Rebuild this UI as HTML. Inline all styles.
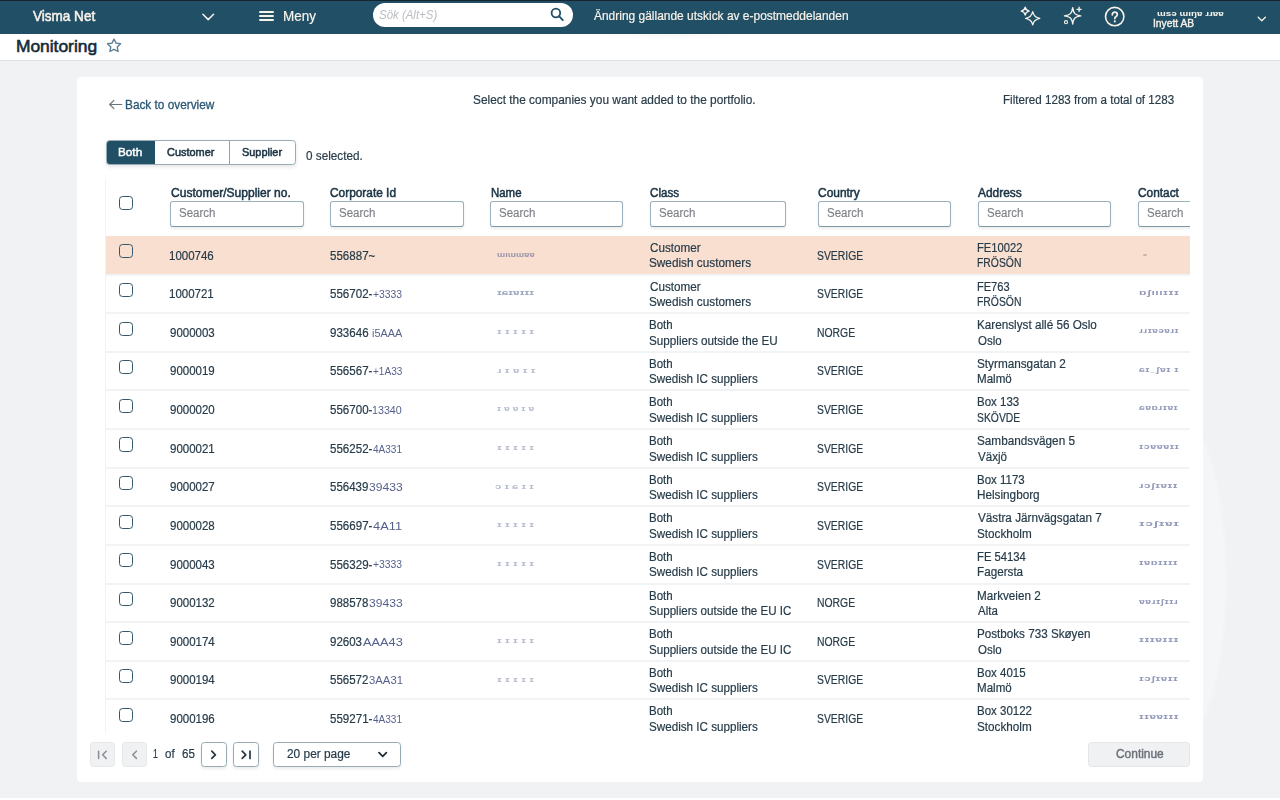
<!DOCTYPE html>
<html>
<head>
<meta charset="utf-8">
<style>
*{box-sizing:border-box;margin:0;padding:0}
html,body{width:1280px;height:800px;overflow:hidden}
body{position:relative;background:#f1f2f4;font-family:"Liberation Sans",sans-serif;color:#263b49}
.a{position:absolute;white-space:nowrap}
.sx{display:inline-block;transform-origin:0 50%}
.inp{position:absolute;height:25.5px;border:1px solid #9bb0bc;border-bottom-color:#7f98a6;border-radius:3px;background:#fff;box-shadow:0 2px 3px rgba(0,0,0,.07)}
.cb{position:absolute;width:14.2px;height:14.2px;border:1.7px solid #325769;border-radius:3.5px}
.rl{position:absolute;left:0;width:1084px;height:2px;background:#f2f3f4}
.pb{position:absolute;top:741.5px;height:25.8px;border-radius:3.5px}
</style>
</head>
<body>
<div class="a" style="left:0;top:0;width:1280px;height:1px;background:#17232e"></div>
<div class="a" style="left:0;top:1px;width:1280px;height:32.7px;background:#214f66"></div>
<div class="a" style="left:32.50px;top:8.002px;font-size:14.5px;line-height:16.197px;color:#f7f2ea;-webkit-text-stroke:0.55px #f7f2ea;"><span class="sx" style="transform:scaleX(0.9333)">Visma Net</span></div>
<svg class="a" style="left:200px;top:11px" width="16" height="12" viewBox="0 0 16 12"><path d="M2.9 3.2 L8.2 8.6 L13.6 3.2" fill="none" stroke="#f7f2ea" stroke-width="1.5" stroke-linecap="round" stroke-linejoin="round"/></svg>
<div class="a" style="left:259.2px;top:11.15px;width:14.6px;height:1.5px;background:#f7f2ea;border-radius:1px"></div>
<div class="a" style="left:259.2px;top:15.15px;width:14.6px;height:1.5px;background:#f7f2ea;border-radius:1px"></div>
<div class="a" style="left:259.2px;top:19.05px;width:14.6px;height:1.5px;background:#f7f2ea;border-radius:1px"></div>
<div class="a" style="left:282.67px;top:8.002px;font-size:14.5px;line-height:16.197px;color:#f7f2ea;-webkit-text-stroke:0.2px #f7f2ea;"><span class="sx" style="transform:scaleX(0.9286)">Meny</span></div>
<div class="a" style="left:373px;top:3.4px;width:199.5px;height:23.6px;background:#fff;border-radius:12px"></div>
<div class="a" style="left:379.00px;top:9.015px;font-size:12px;line-height:13.404px;color:#b9bdc2;font-style:italic;"><span class="sx" style="transform:scaleX(0.9541)">Sök (Alt+S)</span></div>
<svg class="a" style="left:548px;top:5px" width="18" height="18" viewBox="0 0 18 18"><circle cx="7.9" cy="8" r="4.3" fill="none" stroke="#214f66" stroke-width="1.8"/><path d="M11 11.2 L14.8 15.2" stroke="#214f66" stroke-width="1.8" stroke-linecap="round"/></svg>
<div class="a" style="left:593.60px;top:9.863px;font-size:12.5px;line-height:13.963px;color:#f7f2ea;-webkit-text-stroke:0.2px #f7f2ea;"><span class="sx" style="transform:scaleX(0.9564)">Ändring gällande utskick av e-postmeddelanden</span></div>
<svg class="a" style="left:1018px;top:4px" width="26" height="24" viewBox="0 0 26 24"><path d="M7.2 3.2 Q7.9 6.6 11.2 7.1 Q7.9 7.7 7.2 11 Q6.5 7.7 3.2 7.1 Q6.5 6.6 7.2 3.2Z" fill="none" stroke="#f7f2ea" stroke-width="1.3" stroke-linejoin="round"/><path d="M14.7 7.6 Q15.8 13.2 21.8 14.3 Q15.8 15.4 14.7 20.8 Q13.6 15.4 7.6 14.3 Q13.6 13.2 14.7 7.6Z" fill="none" stroke="#f7f2ea" stroke-width="1.3" stroke-linejoin="round"/></svg>
<svg class="a" style="left:1060px;top:4px" width="26" height="24" viewBox="0 0 26 24"><path d="M12.7 3.6 C13.60 9.60 14.90 10.90 20.8 11.8 C14.90 12.70 13.60 14.00 12.7 20.0 C11.80 14.00 10.50 12.70 4.4 11.8 C10.50 10.90 11.80 9.60 12.7 3.6Z" fill="none" stroke="#f7f2ea" stroke-width="1.35" stroke-linejoin="round"/><path d="M19.1 3.2 V7.4 M17 5.3 H21.2" stroke="#f7f2ea" stroke-width="1.3" stroke-linecap="round"/><circle cx="6" cy="18.2" r="1.55" fill="none" stroke="#f7f2ea" stroke-width="1.1"/></svg>
<svg class="a" style="left:1103px;top:5px" width="24" height="24" viewBox="0 0 24 24"><circle cx="11.7" cy="11.6" r="9.2" fill="none" stroke="#f7f2ea" stroke-width="1.6"/><path d="M9.3 9.8 Q9.3 7.1 11.8 7.1 Q14.3 7.1 14.3 9.5 Q14.3 10.9 12.8 11.7 Q11.8 12.2 11.8 13.6" fill="none" stroke="#f7f2ea" stroke-width="1.7" stroke-linecap="round"/><circle cx="11.8" cy="16.4" r="1.05" fill="#f7f2ea"/></svg>
<div class="a" style="left:1157.00px;top:9.885px;font-size:8px;line-height:8.936px;color:#f7f2ea;font-weight:bold;"><span class="sx" style="transform:scaleX(1.2315)">ɯsə ɯıŋɐ ɹɹɐɐ</span></div>
<div class="a" style="left:1153.17px;top:17.020px;font-size:11px;line-height:12.287px;color:#f7f2ea;-webkit-text-stroke:0.4px #f7f2ea;"><span class="sx" style="transform:scaleX(0.9349)">Inyett AB</span></div>
<svg class="a" style="left:1256px;top:15px" width="12" height="8" viewBox="0 0 12 8"><path d="M2.2 2.2 L5.8 5.8 L9.4 2.2" fill="none" stroke="#f7f2ea" stroke-width="1.3" stroke-linecap="round" stroke-linejoin="round"/></svg>
<div class="a" style="left:0;top:33.7px;width:1280px;height:27.2px;background:#fff;border-bottom:1px solid #dfe2e5"></div>
<div class="a" style="left:585px;top:33.7px;width:170px;height:7px;background:radial-gradient(ellipse at 50% 0%, rgba(20,40,80,.035), rgba(20,40,80,0) 70%)"></div>
<div class="a" style="left:15.90px;top:36.978px;font-size:17.4px;line-height:19.436px;color:#132b3b;-webkit-text-stroke:0.6px #132b3b;"><span class="sx" style="transform:scaleX(1.0000)">Monitoring</span></div>
<svg class="a" style="left:105px;top:37px" width="18" height="17" viewBox="0 0 18 17"><path d="M9.00 1.60 L11.00 5.75 L15.56 6.37 L12.23 9.55 L13.06 14.08 L9.00 11.90 L4.94 14.08 L5.77 9.55 L2.44 6.37 L7.00 5.75Z" fill="none" stroke="#5b7d92" stroke-width="1.35" transform="translate(0 0.4)" stroke-linejoin="round"/></svg>
<div class="a" style="left:1150px;top:430px;width:76px;height:300px;border-radius:50%;background:#f5f6f7;filter:blur(2px)"></div>
<div class="a" style="left:77px;top:77px;width:1126px;height:705px;background:#fff;border-radius:4px"></div>
<div class="a" style="left:0;top:798px;width:1280px;height:2px;background:#fff"></div>
<svg class="a" style="left:107px;top:97px" width="17" height="14" viewBox="0 0 17 14"><path d="M14.8 7.5 H2.8 M6.9 3.3 L2.7 7.5 L6.9 11.7" fill="none" stroke="#6c737a" stroke-width="1.15" stroke-linecap="round" stroke-linejoin="round"/></svg>
<div class="a" style="left:125.15px;top:98.862px;font-size:12.5px;line-height:13.963px;color:#2a5774;-webkit-text-stroke:0.3px #2a5774;"><span class="sx" style="transform:scaleX(0.9457)">Back to overview</span></div>
<div class="a" style="left:472.80px;top:93.862px;font-size:12.5px;line-height:13.963px;color:#293c49;-webkit-text-stroke:0.2px #293c49;"><span class="sx" style="transform:scaleX(0.9502)">Select the companies you want added to the portfolio.</span></div>
<div class="a" style="left:1002.77px;top:93.862px;font-size:12.5px;line-height:13.963px;color:#293c49;-webkit-text-stroke:0.2px #293c49;"><span class="sx" style="transform:scaleX(0.9295)">Filtered 1283 from a total of 1283</span></div>
<div class="a" style="left:106px;top:140.1px;width:189.6px;height:24.8px;border:1px solid #97abb7;border-radius:3.5px;background:#fff;box-shadow:0 2px 4px rgba(0,0,0,.10);overflow:hidden"><div style="position:absolute;left:-1px;top:-1px;width:49.4px;height:25px;background:#214f66"></div><div style="position:absolute;left:122.4px;top:0;width:1px;height:23px;background:#8fa4b0"></div></div>
<div class="a" style="left:117.99px;top:145.977px;font-size:11.6px;line-height:12.957px;color:#ffffff;-webkit-text-stroke:0.45px #fff;"><span class="sx" style="transform:scaleX(1.0136)">Both</span></div>
<div class="a" style="left:167.40px;top:145.977px;font-size:11.6px;line-height:12.957px;color:#1c3445;-webkit-text-stroke:0.55px #1c3445;"><span class="sx" style="transform:scaleX(0.9431)">Customer</span></div>
<div class="a" style="left:241.80px;top:145.977px;font-size:11.6px;line-height:12.957px;color:#1c3445;-webkit-text-stroke:0.55px #1c3445;"><span class="sx" style="transform:scaleX(0.9419)">Supplier</span></div>
<div class="a" style="left:306.00px;top:149.863px;font-size:12.5px;line-height:13.963px;color:#293c49;-webkit-text-stroke:0.2px #293c49;"><span class="sx" style="transform:scaleX(0.9383)">0 selected.</span></div>
<div class="a" style="left:106px;top:179px;width:1084px;height:554px;overflow:hidden;background:#fff">
<div class="cb" style="left:13px;top:16.599999999999994px"></div>
<div class="a" style="left:64.50px;top:8.015px;font-size:12px;line-height:13.404px;color:#1a3344;-webkit-text-stroke:0.5px #1a3344;"><span class="sx" style="transform:scaleX(1.0034)">Customer/Supplier no.</span></div>
<div class="inp" style="left:64.10px;top:22.20px;width:133.60px"></div>
<div class="a" style="left:72.90px;top:28.015px;font-size:12px;line-height:13.404px;color:#7d8186;-webkit-text-stroke:0.15px #7d8186;"><span class="sx" style="transform:scaleX(0.9553)">Search</span></div>
<div class="a" style="left:224.20px;top:8.015px;font-size:12px;line-height:13.404px;color:#1a3344;-webkit-text-stroke:0.5px #1a3344;"><span class="sx" style="transform:scaleX(0.9896)">Corporate Id</span></div>
<div class="inp" style="left:224.10px;top:22.20px;width:133.60px"></div>
<div class="a" style="left:232.90px;top:28.015px;font-size:12px;line-height:13.404px;color:#7d8186;-webkit-text-stroke:0.15px #7d8186;"><span class="sx" style="transform:scaleX(0.9553)">Search</span></div>
<div class="a" style="left:384.50px;top:8.015px;font-size:12px;line-height:13.404px;color:#1a3344;-webkit-text-stroke:0.5px #1a3344;"><span class="sx" style="transform:scaleX(0.9531)">Name</span></div>
<div class="inp" style="left:384.40px;top:22.20px;width:133.00px"></div>
<div class="a" style="left:393.20px;top:28.015px;font-size:12px;line-height:13.404px;color:#7d8186;-webkit-text-stroke:0.15px #7d8186;"><span class="sx" style="transform:scaleX(0.9553)">Search</span></div>
<div class="a" style="left:544.40px;top:8.015px;font-size:12px;line-height:13.404px;color:#1a3344;-webkit-text-stroke:0.5px #1a3344;"><span class="sx" style="transform:scaleX(0.9667)">Class</span></div>
<div class="inp" style="left:544.30px;top:22.20px;width:136.00px"></div>
<div class="a" style="left:553.10px;top:28.015px;font-size:12px;line-height:13.404px;color:#7d8186;-webkit-text-stroke:0.15px #7d8186;"><span class="sx" style="transform:scaleX(0.9553)">Search</span></div>
<div class="a" style="left:712.00px;top:8.015px;font-size:12px;line-height:13.404px;color:#1a3344;-webkit-text-stroke:0.5px #1a3344;"><span class="sx" style="transform:scaleX(0.9953)">Country</span></div>
<div class="inp" style="left:712.00px;top:22.20px;width:132.70px"></div>
<div class="a" style="left:720.80px;top:28.015px;font-size:12px;line-height:13.404px;color:#7d8186;-webkit-text-stroke:0.15px #7d8186;"><span class="sx" style="transform:scaleX(0.9553)">Search</span></div>
<div class="a" style="left:872.30px;top:8.015px;font-size:12px;line-height:13.404px;color:#1a3344;-webkit-text-stroke:0.5px #1a3344;"><span class="sx" style="transform:scaleX(0.9932)">Address</span></div>
<div class="inp" style="left:871.90px;top:22.20px;width:132.80px"></div>
<div class="a" style="left:880.70px;top:28.015px;font-size:12px;line-height:13.404px;color:#7d8186;-webkit-text-stroke:0.15px #7d8186;"><span class="sx" style="transform:scaleX(0.9553)">Search</span></div>
<div class="a" style="left:1032.30px;top:8.015px;font-size:12px;line-height:13.404px;color:#1a3344;-webkit-text-stroke:0.5px #1a3344;"><span class="sx" style="transform:scaleX(0.9881)">Contact</span></div>
<div class="inp" style="left:1032.00px;top:22.20px;width:80.00px"></div>
<div class="a" style="left:1040.80px;top:28.015px;font-size:12px;line-height:13.404px;color:#7d8186;-webkit-text-stroke:0.15px #7d8186;"><span class="sx" style="transform:scaleX(0.9553)">Search</span></div>
<div class="a" style="left:0;top:57.00px;width:1084px;height:38.02px;background:#f9dfd0"></div>
<div class="rl" style="top:94.62px"></div>
<div class="cb" style="left:13px;top:65.30px"></div>
<div class="a" style="left:63.08px;top:70.862px;font-size:12.5px;line-height:13.963px;color:#263b49;-webkit-text-stroke:0.2px #263b49;"><span class="sx" style="transform:scaleX(0.9200)">1000746</span></div>
<div class="a" style="left:223.60px;top:70.862px;font-size:12.5px;line-height:13.963px;color:#263b49;-webkit-text-stroke:0.2px #263b49;"><span class="sx" style="transform:scaleX(0.9243)">556887~</span></div>
<div class="a" style="left:391.00px;top:71.665px;font-size:7px;line-height:7.819px;color:#4b5a8c;font-weight:bold;opacity:.55;"><span class="sx" style="transform:scaleX(1.3214)">ɯıɯɯɐɐ</span></div>
<div class="a" style="left:543.90px;top:62.862px;font-size:12.5px;line-height:13.963px;color:#263b49;-webkit-text-stroke:0.2px #263b49;"><span class="sx" style="transform:scaleX(0.9350)">Customer</span></div>
<div class="a" style="left:542.96px;top:77.862px;font-size:12.5px;line-height:13.963px;color:#263b49;-webkit-text-stroke:0.2px #263b49;"><span class="sx" style="transform:scaleX(0.9429)">Swedish customers</span></div>
<div class="a" style="left:710.97px;top:70.862px;font-size:12.5px;line-height:13.963px;color:#263b49;-webkit-text-stroke:0.2px #263b49;"><span class="sx" style="transform:scaleX(0.8300)">SVERIGE</span></div>
<div class="a" style="left:870.91px;top:62.862px;font-size:12.5px;line-height:13.963px;color:#263b49;-webkit-text-stroke:0.2px #263b49;"><span class="sx" style="transform:scaleX(0.8943)">FE10022</span></div>
<div class="a" style="left:870.97px;top:77.862px;font-size:12.5px;line-height:13.963px;color:#263b49;-webkit-text-stroke:0.2px #263b49;"><span class="sx" style="transform:scaleX(0.8300)">FRÖSÖN</span></div>
<div class="a" style="left:1037px;top:74.50px;width:4px;height:2px;background:#9a8a90;opacity:.5;border-radius:1px"></div>
<div class="rl" style="top:133.24px"></div>
<div class="cb" style="left:13px;top:103.92px"></div>
<div class="a" style="left:63.08px;top:108.862px;font-size:12.5px;line-height:13.963px;color:#263b49;-webkit-text-stroke:0.2px #263b49;"><span class="sx" style="transform:scaleX(0.9200)">1000721</span></div>
<div class="a" style="left:223.60px;top:108.862px;font-size:12.5px;line-height:13.963px;color:#263b49;-webkit-text-stroke:0.2px #263b49;"><span class="sx" style="transform:scaleX(0.9243)">556702-</span></div>
<div class="a" style="left:267.32px;top:109.020px;font-size:11px;line-height:12.287px;color:#2a3870;opacity:.8;"><span class="sx" style="transform:scaleX(0.9414)">+3333</span></div>
<div class="a" style="left:391.00px;top:109.665px;font-size:7px;line-height:7.819px;color:#4b5a8c;font-weight:bold;opacity:.55;"><span class="sx" style="transform:scaleX(1.6818)">ɪɕɪɐɪɪɪ</span></div>
<div class="a" style="left:543.90px;top:101.862px;font-size:12.5px;line-height:13.963px;color:#263b49;-webkit-text-stroke:0.2px #263b49;"><span class="sx" style="transform:scaleX(0.9350)">Customer</span></div>
<div class="a" style="left:542.96px;top:116.862px;font-size:12.5px;line-height:13.963px;color:#263b49;-webkit-text-stroke:0.2px #263b49;"><span class="sx" style="transform:scaleX(0.9429)">Swedish customers</span></div>
<div class="a" style="left:710.97px;top:108.862px;font-size:12.5px;line-height:13.963px;color:#263b49;-webkit-text-stroke:0.2px #263b49;"><span class="sx" style="transform:scaleX(0.8300)">SVERIGE</span></div>
<div class="a" style="left:870.92px;top:101.862px;font-size:12.5px;line-height:13.963px;color:#263b49;-webkit-text-stroke:0.2px #263b49;"><span class="sx" style="transform:scaleX(0.8840)">FE763</span></div>
<div class="a" style="left:870.97px;top:116.862px;font-size:12.5px;line-height:13.963px;color:#263b49;-webkit-text-stroke:0.2px #263b49;"><span class="sx" style="transform:scaleX(0.8300)">FRÖSÖN</span></div>
<div class="a" style="left:1033.00px;top:110.213px;font-size:7.5px;line-height:8.377px;color:#3a4680;font-weight:bold;opacity:.55;letter-spacing:0.3px;"><span class="sx" style="transform:scaleX(1.6250)">ɒʃıııɪɪɪ</span></div>
<div class="rl" style="top:171.86px"></div>
<div class="cb" style="left:13px;top:142.54px"></div>
<div class="a" style="left:64.00px;top:147.863px;font-size:12.5px;line-height:13.963px;color:#263b49;-webkit-text-stroke:0.2px #263b49;"><span class="sx" style="transform:scaleX(0.9200)">9000003</span></div>
<div class="a" style="left:223.60px;top:147.863px;font-size:12.5px;line-height:13.963px;color:#263b49;-webkit-text-stroke:0.2px #263b49;"><span class="sx" style="transform:scaleX(0.9243)">933646 </span></div>
<div class="a" style="left:265.93px;top:148.020px;font-size:11px;line-height:12.287px;color:#2a3870;opacity:.8;"><span class="sx" style="transform:scaleX(0.9860)">i5AAA</span></div>
<div class="a" style="left:391.00px;top:148.665px;font-size:7px;line-height:7.819px;color:#4b5a8c;font-weight:bold;opacity:.4;"><span class="sx" style="transform:scaleX(1.6818)">ɪ ɪ ɪ ɪ ɪ</span></div>
<div class="a" style="left:542.98px;top:139.863px;font-size:12.5px;line-height:13.963px;color:#263b49;-webkit-text-stroke:0.2px #263b49;"><span class="sx" style="transform:scaleX(0.9200)">Both</span></div>
<div class="a" style="left:542.97px;top:155.863px;font-size:12.5px;line-height:13.963px;color:#263b49;-webkit-text-stroke:0.2px #263b49;"><span class="sx" style="transform:scaleX(0.9350)">Suppliers outside the EU</span></div>
<div class="a" style="left:710.97px;top:147.863px;font-size:12.5px;line-height:13.963px;color:#263b49;-webkit-text-stroke:0.2px #263b49;"><span class="sx" style="transform:scaleX(0.8300)">NORGE</span></div>
<div class="a" style="left:870.86px;top:139.863px;font-size:12.5px;line-height:13.963px;color:#263b49;-webkit-text-stroke:0.2px #263b49;"><span class="sx" style="transform:scaleX(0.9370)">Karenslyst allé 56 Oslo</span></div>
<div class="a" style="left:871.80px;top:155.863px;font-size:12.5px;line-height:13.963px;color:#263b49;-webkit-text-stroke:0.2px #263b49;"><span class="sx" style="transform:scaleX(0.9200)">Oslo</span></div>
<div class="a" style="left:1033.00px;top:148.213px;font-size:7.5px;line-height:8.377px;color:#3a4680;font-weight:bold;opacity:.55;letter-spacing:0.3px;"><span class="sx" style="transform:scaleX(1.3448)">ɹɹɪɐəɐɹɪ</span></div>
<div class="rl" style="top:210.48px"></div>
<div class="cb" style="left:13px;top:181.16px"></div>
<div class="a" style="left:64.00px;top:185.863px;font-size:12.5px;line-height:13.963px;color:#263b49;-webkit-text-stroke:0.2px #263b49;"><span class="sx" style="transform:scaleX(0.9200)">9000019</span></div>
<div class="a" style="left:223.60px;top:185.863px;font-size:12.5px;line-height:13.963px;color:#263b49;-webkit-text-stroke:0.2px #263b49;"><span class="sx" style="transform:scaleX(0.9243)">556567-</span></div>
<div class="a" style="left:267.32px;top:186.020px;font-size:11px;line-height:12.287px;color:#2a3870;opacity:.8;"><span class="sx" style="transform:scaleX(0.9120)">+1A33</span></div>
<div class="a" style="left:391.00px;top:187.665px;font-size:7px;line-height:7.819px;color:#4b5a8c;font-weight:bold;opacity:.4;"><span class="sx" style="transform:scaleX(1.6818)">ɹ ɪ ɐ ɪ ɪ</span></div>
<div class="a" style="left:542.98px;top:178.863px;font-size:12.5px;line-height:13.963px;color:#263b49;-webkit-text-stroke:0.2px #263b49;"><span class="sx" style="transform:scaleX(0.9200)">Both</span></div>
<div class="a" style="left:542.97px;top:193.863px;font-size:12.5px;line-height:13.963px;color:#263b49;-webkit-text-stroke:0.2px #263b49;"><span class="sx" style="transform:scaleX(0.9320)">Swedish IC suppliers</span></div>
<div class="a" style="left:710.97px;top:185.863px;font-size:12.5px;line-height:13.963px;color:#263b49;-webkit-text-stroke:0.2px #263b49;"><span class="sx" style="transform:scaleX(0.8300)">SVERIGE</span></div>
<div class="a" style="left:870.86px;top:178.863px;font-size:12.5px;line-height:13.963px;color:#263b49;-webkit-text-stroke:0.2px #263b49;"><span class="sx" style="transform:scaleX(0.9400)">Styrmansgatan 2</span></div>
<div class="a" style="left:870.87px;top:193.863px;font-size:12.5px;line-height:13.963px;color:#263b49;-webkit-text-stroke:0.2px #263b49;"><span class="sx" style="transform:scaleX(0.9260)">Malmö</span></div>
<div class="a" style="left:1033.00px;top:187.213px;font-size:7.5px;line-height:8.377px;color:#3a4680;font-weight:bold;opacity:.55;letter-spacing:0.3px;"><span class="sx" style="transform:scaleX(1.3929)">ɕɪ_ʃɐɪ ɪ</span></div>
<div class="rl" style="top:249.10px"></div>
<div class="cb" style="left:13px;top:219.78px"></div>
<div class="a" style="left:64.00px;top:224.863px;font-size:12.5px;line-height:13.963px;color:#263b49;-webkit-text-stroke:0.2px #263b49;"><span class="sx" style="transform:scaleX(0.9200)">9000020</span></div>
<div class="a" style="left:223.60px;top:224.863px;font-size:12.5px;line-height:13.963px;color:#263b49;-webkit-text-stroke:0.2px #263b49;"><span class="sx" style="transform:scaleX(0.9243)">556700-</span></div>
<div class="a" style="left:266.34px;top:225.020px;font-size:11px;line-height:12.287px;color:#2a3870;opacity:.8;"><span class="sx" style="transform:scaleX(0.9728)">13340</span></div>
<div class="a" style="left:391.00px;top:225.665px;font-size:7px;line-height:7.819px;color:#4b5a8c;font-weight:bold;opacity:.4;"><span class="sx" style="transform:scaleX(1.4800)">ɪ ɐ ɐ ɪ ɐ</span></div>
<div class="a" style="left:542.98px;top:216.863px;font-size:12.5px;line-height:13.963px;color:#263b49;-webkit-text-stroke:0.2px #263b49;"><span class="sx" style="transform:scaleX(0.9200)">Both</span></div>
<div class="a" style="left:542.97px;top:232.863px;font-size:12.5px;line-height:13.963px;color:#263b49;-webkit-text-stroke:0.2px #263b49;"><span class="sx" style="transform:scaleX(0.9320)">Swedish IC suppliers</span></div>
<div class="a" style="left:710.97px;top:224.863px;font-size:12.5px;line-height:13.963px;color:#263b49;-webkit-text-stroke:0.2px #263b49;"><span class="sx" style="transform:scaleX(0.8300)">SVERIGE</span></div>
<div class="a" style="left:870.88px;top:216.863px;font-size:12.5px;line-height:13.963px;color:#263b49;-webkit-text-stroke:0.2px #263b49;"><span class="sx" style="transform:scaleX(0.9200)">Box 133</span></div>
<div class="a" style="left:870.97px;top:232.863px;font-size:12.5px;line-height:13.963px;color:#263b49;-webkit-text-stroke:0.2px #263b49;"><span class="sx" style="transform:scaleX(0.8300)">SKÖVDE</span></div>
<div class="a" style="left:1033.00px;top:225.213px;font-size:7.5px;line-height:8.377px;color:#3a4680;font-weight:bold;opacity:.55;letter-spacing:0.3px;"><span class="sx" style="transform:scaleX(1.3929)">ɕɐɒɹɪɐɪ</span></div>
<div class="rl" style="top:287.72px"></div>
<div class="cb" style="left:13px;top:258.40px"></div>
<div class="a" style="left:64.00px;top:263.863px;font-size:12.5px;line-height:13.963px;color:#263b49;-webkit-text-stroke:0.2px #263b49;"><span class="sx" style="transform:scaleX(0.9200)">9000021</span></div>
<div class="a" style="left:223.60px;top:263.863px;font-size:12.5px;line-height:13.963px;color:#263b49;-webkit-text-stroke:0.2px #263b49;"><span class="sx" style="transform:scaleX(0.9243)">556252-</span></div>
<div class="a" style="left:267.32px;top:264.020px;font-size:11px;line-height:12.287px;color:#2a3870;opacity:.8;"><span class="sx" style="transform:scaleX(0.9120)">4A331</span></div>
<div class="a" style="left:391.00px;top:264.665px;font-size:7px;line-height:7.819px;color:#4b5a8c;font-weight:bold;opacity:.4;"><span class="sx" style="transform:scaleX(1.6818)">ɪ ɪ ɪ ɪ ɪ</span></div>
<div class="a" style="left:542.98px;top:255.863px;font-size:12.5px;line-height:13.963px;color:#263b49;-webkit-text-stroke:0.2px #263b49;"><span class="sx" style="transform:scaleX(0.9200)">Both</span></div>
<div class="a" style="left:542.97px;top:271.863px;font-size:12.5px;line-height:13.963px;color:#263b49;-webkit-text-stroke:0.2px #263b49;"><span class="sx" style="transform:scaleX(0.9320)">Swedish IC suppliers</span></div>
<div class="a" style="left:710.97px;top:263.863px;font-size:12.5px;line-height:13.963px;color:#263b49;-webkit-text-stroke:0.2px #263b49;"><span class="sx" style="transform:scaleX(0.8300)">SVERIGE</span></div>
<div class="a" style="left:870.86px;top:255.863px;font-size:12.5px;line-height:13.963px;color:#263b49;-webkit-text-stroke:0.2px #263b49;"><span class="sx" style="transform:scaleX(0.9400)">Sambandsvägen 5</span></div>
<div class="a" style="left:871.80px;top:271.863px;font-size:12.5px;line-height:13.963px;color:#263b49;-webkit-text-stroke:0.2px #263b49;"><span class="sx" style="transform:scaleX(0.9260)">Växjö</span></div>
<div class="a" style="left:1033.00px;top:264.212px;font-size:7.5px;line-height:8.377px;color:#3a4680;font-weight:bold;opacity:.55;letter-spacing:0.3px;"><span class="sx" style="transform:scaleX(1.4444)">ɪɔɐɐɐɪɪ</span></div>
<div class="rl" style="top:326.34px"></div>
<div class="cb" style="left:13px;top:297.02px"></div>
<div class="a" style="left:64.00px;top:301.863px;font-size:12.5px;line-height:13.963px;color:#263b49;-webkit-text-stroke:0.2px #263b49;"><span class="sx" style="transform:scaleX(0.9200)">9000027</span></div>
<div class="a" style="left:223.60px;top:301.863px;font-size:12.5px;line-height:13.963px;color:#263b49;-webkit-text-stroke:0.2px #263b49;"><span class="sx" style="transform:scaleX(0.9200)">556439</span></div>
<div class="a" style="left:263.44px;top:302.020px;font-size:11px;line-height:12.287px;color:#2a3870;opacity:.8;"><span class="sx" style="transform:scaleX(1.1020)">39433</span></div>
<div class="a" style="left:389.39px;top:303.665px;font-size:7px;line-height:7.819px;color:#4b5a8c;font-weight:bold;opacity:.4;"><span class="sx" style="transform:scaleX(1.6087)">ɔ ɪ ɕ ɪ ɪ</span></div>
<div class="a" style="left:542.98px;top:294.863px;font-size:12.5px;line-height:13.963px;color:#263b49;-webkit-text-stroke:0.2px #263b49;"><span class="sx" style="transform:scaleX(0.9200)">Both</span></div>
<div class="a" style="left:542.97px;top:309.863px;font-size:12.5px;line-height:13.963px;color:#263b49;-webkit-text-stroke:0.2px #263b49;"><span class="sx" style="transform:scaleX(0.9320)">Swedish IC suppliers</span></div>
<div class="a" style="left:710.97px;top:301.863px;font-size:12.5px;line-height:13.963px;color:#263b49;-webkit-text-stroke:0.2px #263b49;"><span class="sx" style="transform:scaleX(0.8300)">SVERIGE</span></div>
<div class="a" style="left:870.88px;top:294.863px;font-size:12.5px;line-height:13.963px;color:#263b49;-webkit-text-stroke:0.2px #263b49;"><span class="sx" style="transform:scaleX(0.9200)">Box 1173</span></div>
<div class="a" style="left:870.86px;top:309.863px;font-size:12.5px;line-height:13.963px;color:#263b49;-webkit-text-stroke:0.2px #263b49;"><span class="sx" style="transform:scaleX(0.9391)">Helsingborg</span></div>
<div class="a" style="left:1033.00px;top:303.212px;font-size:7.5px;line-height:8.377px;color:#3a4680;font-weight:bold;opacity:.55;letter-spacing:0.3px;"><span class="sx" style="transform:scaleX(1.5600)">ɹɔʃɪɐɪɪ</span></div>
<div class="rl" style="top:364.96px"></div>
<div class="cb" style="left:13px;top:335.64px"></div>
<div class="a" style="left:64.00px;top:340.863px;font-size:12.5px;line-height:13.963px;color:#263b49;-webkit-text-stroke:0.2px #263b49;"><span class="sx" style="transform:scaleX(0.9200)">9000028</span></div>
<div class="a" style="left:223.60px;top:340.863px;font-size:12.5px;line-height:13.963px;color:#263b49;-webkit-text-stroke:0.2px #263b49;"><span class="sx" style="transform:scaleX(0.9243)">556697-</span></div>
<div class="a" style="left:267.32px;top:341.020px;font-size:11px;line-height:12.287px;color:#2a3870;opacity:.8;"><span class="sx" style="transform:scaleX(1.1673)">4A11</span></div>
<div class="a" style="left:391.00px;top:341.665px;font-size:7px;line-height:7.819px;color:#4b5a8c;font-weight:bold;opacity:.4;"><span class="sx" style="transform:scaleX(1.6818)">ɪ ɪ ɪ ɪ ɪ</span></div>
<div class="a" style="left:542.98px;top:332.863px;font-size:12.5px;line-height:13.963px;color:#263b49;-webkit-text-stroke:0.2px #263b49;"><span class="sx" style="transform:scaleX(0.9200)">Both</span></div>
<div class="a" style="left:542.97px;top:348.863px;font-size:12.5px;line-height:13.963px;color:#263b49;-webkit-text-stroke:0.2px #263b49;"><span class="sx" style="transform:scaleX(0.9320)">Swedish IC suppliers</span></div>
<div class="a" style="left:710.97px;top:340.863px;font-size:12.5px;line-height:13.963px;color:#263b49;-webkit-text-stroke:0.2px #263b49;"><span class="sx" style="transform:scaleX(0.8300)">SVERIGE</span></div>
<div class="a" style="left:871.80px;top:332.863px;font-size:12.5px;line-height:13.963px;color:#263b49;-webkit-text-stroke:0.2px #263b49;"><span class="sx" style="transform:scaleX(0.9377)">Västra Järnvägsgatan 7</span></div>
<div class="a" style="left:870.86px;top:348.863px;font-size:12.5px;line-height:13.963px;color:#263b49;-webkit-text-stroke:0.2px #263b49;"><span class="sx" style="transform:scaleX(0.9367)">Stockholm</span></div>
<div class="a" style="left:1033.00px;top:341.212px;font-size:7.5px;line-height:8.377px;color:#3a4680;font-weight:bold;opacity:.55;letter-spacing:0.3px;"><span class="sx" style="transform:scaleX(1.8571)">ɪɔʃɪɐɪ</span></div>
<div class="rl" style="top:403.58px"></div>
<div class="cb" style="left:13px;top:374.26px"></div>
<div class="a" style="left:64.00px;top:379.863px;font-size:12.5px;line-height:13.963px;color:#263b49;-webkit-text-stroke:0.2px #263b49;"><span class="sx" style="transform:scaleX(0.9200)">9000043</span></div>
<div class="a" style="left:223.60px;top:379.863px;font-size:12.5px;line-height:13.963px;color:#263b49;-webkit-text-stroke:0.2px #263b49;"><span class="sx" style="transform:scaleX(0.9243)">556329-</span></div>
<div class="a" style="left:267.32px;top:379.020px;font-size:11px;line-height:12.287px;color:#2a3870;opacity:.8;"><span class="sx" style="transform:scaleX(0.9414)">+3333</span></div>
<div class="a" style="left:391.00px;top:380.665px;font-size:7px;line-height:7.819px;color:#4b5a8c;font-weight:bold;opacity:.4;"><span class="sx" style="transform:scaleX(1.6818)">ɪ ɪ ɪ ɪ ɪ</span></div>
<div class="a" style="left:542.98px;top:371.863px;font-size:12.5px;line-height:13.963px;color:#263b49;-webkit-text-stroke:0.2px #263b49;"><span class="sx" style="transform:scaleX(0.9200)">Both</span></div>
<div class="a" style="left:542.97px;top:386.863px;font-size:12.5px;line-height:13.963px;color:#263b49;-webkit-text-stroke:0.2px #263b49;"><span class="sx" style="transform:scaleX(0.9320)">Swedish IC suppliers</span></div>
<div class="a" style="left:710.97px;top:379.863px;font-size:12.5px;line-height:13.963px;color:#263b49;-webkit-text-stroke:0.2px #263b49;"><span class="sx" style="transform:scaleX(0.8300)">SVERIGE</span></div>
<div class="a" style="left:870.90px;top:371.863px;font-size:12.5px;line-height:13.963px;color:#263b49;-webkit-text-stroke:0.2px #263b49;"><span class="sx" style="transform:scaleX(0.9012)">FE 54134</span></div>
<div class="a" style="left:870.87px;top:386.863px;font-size:12.5px;line-height:13.963px;color:#263b49;-webkit-text-stroke:0.2px #263b49;"><span class="sx" style="transform:scaleX(0.9350)">Fagersta</span></div>
<div class="a" style="left:1033.00px;top:380.212px;font-size:7.5px;line-height:8.377px;color:#3a4680;font-weight:bold;opacity:.55;letter-spacing:0.3px;"><span class="sx" style="transform:scaleX(1.5000)">ɪɐɒɪɪɪɪ</span></div>
<div class="rl" style="top:442.20px"></div>
<div class="cb" style="left:13px;top:412.88px"></div>
<div class="a" style="left:64.00px;top:417.863px;font-size:12.5px;line-height:13.963px;color:#263b49;-webkit-text-stroke:0.2px #263b49;"><span class="sx" style="transform:scaleX(0.9200)">9000132</span></div>
<div class="a" style="left:223.60px;top:417.863px;font-size:12.5px;line-height:13.963px;color:#263b49;-webkit-text-stroke:0.2px #263b49;"><span class="sx" style="transform:scaleX(0.9200)">988578</span></div>
<div class="a" style="left:263.44px;top:418.020px;font-size:11px;line-height:12.287px;color:#2a3870;opacity:.8;"><span class="sx" style="transform:scaleX(1.1020)">39433</span></div>
<div class="a" style="left:542.98px;top:410.863px;font-size:12.5px;line-height:13.963px;color:#263b49;-webkit-text-stroke:0.2px #263b49;"><span class="sx" style="transform:scaleX(0.9200)">Both</span></div>
<div class="a" style="left:542.97px;top:425.863px;font-size:12.5px;line-height:13.963px;color:#263b49;-webkit-text-stroke:0.2px #263b49;"><span class="sx" style="transform:scaleX(0.9278)">Suppliers outside the EU IC</span></div>
<div class="a" style="left:710.97px;top:417.863px;font-size:12.5px;line-height:13.963px;color:#263b49;-webkit-text-stroke:0.2px #263b49;"><span class="sx" style="transform:scaleX(0.8300)">NORGE</span></div>
<div class="a" style="left:870.86px;top:410.863px;font-size:12.5px;line-height:13.963px;color:#263b49;-webkit-text-stroke:0.2px #263b49;"><span class="sx" style="transform:scaleX(0.9364)">Markveien 2</span></div>
<div class="a" style="left:871.80px;top:425.863px;font-size:12.5px;line-height:13.963px;color:#263b49;-webkit-text-stroke:0.2px #263b49;"><span class="sx" style="transform:scaleX(0.9200)">Alta</span></div>
<div class="a" style="left:1033.00px;top:419.212px;font-size:7.5px;line-height:8.377px;color:#3a4680;font-weight:bold;opacity:.55;letter-spacing:0.3px;"><span class="sx" style="transform:scaleX(1.3929)">ɐɐɹɪʃɪɪɹ</span></div>
<div class="rl" style="top:480.82px"></div>
<div class="cb" style="left:13px;top:451.50px"></div>
<div class="a" style="left:64.00px;top:456.863px;font-size:12.5px;line-height:13.963px;color:#263b49;-webkit-text-stroke:0.2px #263b49;"><span class="sx" style="transform:scaleX(0.9200)">9000174</span></div>
<div class="a" style="left:223.60px;top:456.863px;font-size:12.5px;line-height:13.963px;color:#263b49;-webkit-text-stroke:0.2px #263b49;"><span class="sx" style="transform:scaleX(0.9200)">92603</span></div>
<div class="a" style="left:257.00px;top:457.020px;font-size:11px;line-height:12.287px;color:#2a3870;opacity:.8;"><span class="sx" style="transform:scaleX(1.1618)">AAA43</span></div>
<div class="a" style="left:391.00px;top:457.665px;font-size:7px;line-height:7.819px;color:#4b5a8c;font-weight:bold;opacity:.4;"><span class="sx" style="transform:scaleX(1.6818)">ɪ ɪ ɪ ɪ ɪ</span></div>
<div class="a" style="left:542.98px;top:448.863px;font-size:12.5px;line-height:13.963px;color:#263b49;-webkit-text-stroke:0.2px #263b49;"><span class="sx" style="transform:scaleX(0.9200)">Both</span></div>
<div class="a" style="left:542.97px;top:464.863px;font-size:12.5px;line-height:13.963px;color:#263b49;-webkit-text-stroke:0.2px #263b49;"><span class="sx" style="transform:scaleX(0.9278)">Suppliers outside the EU IC</span></div>
<div class="a" style="left:710.97px;top:456.863px;font-size:12.5px;line-height:13.963px;color:#263b49;-webkit-text-stroke:0.2px #263b49;"><span class="sx" style="transform:scaleX(0.8300)">NORGE</span></div>
<div class="a" style="left:870.87px;top:448.863px;font-size:12.5px;line-height:13.963px;color:#263b49;-webkit-text-stroke:0.2px #263b49;"><span class="sx" style="transform:scaleX(0.9326)">Postboks 733 Skøyen</span></div>
<div class="a" style="left:871.80px;top:464.863px;font-size:12.5px;line-height:13.963px;color:#263b49;-webkit-text-stroke:0.2px #263b49;"><span class="sx" style="transform:scaleX(0.9200)">Oslo</span></div>
<div class="a" style="left:1033.00px;top:457.212px;font-size:7.5px;line-height:8.377px;color:#3a4680;font-weight:bold;opacity:.55;letter-spacing:0.3px;"><span class="sx" style="transform:scaleX(1.6250)">ɪɪɪɐɪɪɪ</span></div>
<div class="rl" style="top:519.44px"></div>
<div class="cb" style="left:13px;top:490.12px"></div>
<div class="a" style="left:64.00px;top:494.863px;font-size:12.5px;line-height:13.963px;color:#263b49;-webkit-text-stroke:0.2px #263b49;"><span class="sx" style="transform:scaleX(0.9200)">9000194</span></div>
<div class="a" style="left:223.60px;top:494.863px;font-size:12.5px;line-height:13.963px;color:#263b49;-webkit-text-stroke:0.2px #263b49;"><span class="sx" style="transform:scaleX(0.9200)">556572</span></div>
<div class="a" style="left:262.52px;top:495.020px;font-size:11px;line-height:12.287px;color:#2a3870;opacity:.8;"><span class="sx" style="transform:scaleX(1.0297)">3AA31</span></div>
<div class="a" style="left:391.00px;top:496.665px;font-size:7px;line-height:7.819px;color:#4b5a8c;font-weight:bold;opacity:.4;"><span class="sx" style="transform:scaleX(1.6818)">ɪ ɪ ɪ ɪ ɪ</span></div>
<div class="a" style="left:542.98px;top:487.863px;font-size:12.5px;line-height:13.963px;color:#263b49;-webkit-text-stroke:0.2px #263b49;"><span class="sx" style="transform:scaleX(0.9200)">Both</span></div>
<div class="a" style="left:542.97px;top:502.863px;font-size:12.5px;line-height:13.963px;color:#263b49;-webkit-text-stroke:0.2px #263b49;"><span class="sx" style="transform:scaleX(0.9320)">Swedish IC suppliers</span></div>
<div class="a" style="left:710.97px;top:494.863px;font-size:12.5px;line-height:13.963px;color:#263b49;-webkit-text-stroke:0.2px #263b49;"><span class="sx" style="transform:scaleX(0.8300)">SVERIGE</span></div>
<div class="a" style="left:870.88px;top:487.863px;font-size:12.5px;line-height:13.963px;color:#263b49;-webkit-text-stroke:0.2px #263b49;"><span class="sx" style="transform:scaleX(0.9200)">Box 4015</span></div>
<div class="a" style="left:870.87px;top:502.863px;font-size:12.5px;line-height:13.963px;color:#263b49;-webkit-text-stroke:0.2px #263b49;"><span class="sx" style="transform:scaleX(0.9260)">Malmö</span></div>
<div class="a" style="left:1033.00px;top:496.212px;font-size:7.5px;line-height:8.377px;color:#3a4680;font-weight:bold;opacity:.55;letter-spacing:0.3px;"><span class="sx" style="transform:scaleX(1.5600)">ɪɔʃɪɐɪɪ</span></div>
<div class="cb" style="left:13px;top:528.74px"></div>
<div class="a" style="left:64.00px;top:533.862px;font-size:12.5px;line-height:13.963px;color:#263b49;-webkit-text-stroke:0.2px #263b49;"><span class="sx" style="transform:scaleX(0.9200)">9000196</span></div>
<div class="a" style="left:223.60px;top:533.862px;font-size:12.5px;line-height:13.963px;color:#263b49;-webkit-text-stroke:0.2px #263b49;"><span class="sx" style="transform:scaleX(0.9243)">559271-</span></div>
<div class="a" style="left:267.32px;top:534.020px;font-size:11px;line-height:12.287px;color:#2a3870;opacity:.8;"><span class="sx" style="transform:scaleX(0.9120)">4A331</span></div>
<div class="a" style="left:542.98px;top:525.862px;font-size:12.5px;line-height:13.963px;color:#263b49;-webkit-text-stroke:0.2px #263b49;"><span class="sx" style="transform:scaleX(0.9200)">Both</span></div>
<div class="a" style="left:542.97px;top:541.862px;font-size:12.5px;line-height:13.963px;color:#263b49;-webkit-text-stroke:0.2px #263b49;"><span class="sx" style="transform:scaleX(0.9320)">Swedish IC suppliers</span></div>
<div class="a" style="left:710.97px;top:533.862px;font-size:12.5px;line-height:13.963px;color:#263b49;-webkit-text-stroke:0.2px #263b49;"><span class="sx" style="transform:scaleX(0.8300)">SVERIGE</span></div>
<div class="a" style="left:870.88px;top:525.862px;font-size:12.5px;line-height:13.963px;color:#263b49;-webkit-text-stroke:0.2px #263b49;"><span class="sx" style="transform:scaleX(0.9200)">Box 30122</span></div>
<div class="a" style="left:870.86px;top:541.862px;font-size:12.5px;line-height:13.963px;color:#263b49;-webkit-text-stroke:0.2px #263b49;"><span class="sx" style="transform:scaleX(0.9367)">Stockholm</span></div>
<div class="a" style="left:1033.00px;top:534.212px;font-size:7.5px;line-height:8.377px;color:#3a4680;font-weight:bold;opacity:.55;letter-spacing:0.3px;"><span class="sx" style="transform:scaleX(1.5600)">ɪɪɐɐɪɪɪ</span></div>
</div>
<div class="a" style="left:105px;top:179px;width:1px;height:554px;background:#f0f2f3"></div>
<div class="pb" style="left:89.9px;width:25px;background:#f0f1f3;border:1px solid #e6e8ea"></div>
<div class="pb" style="left:121.7px;width:25.3px;background:#f0f1f3;border:1px solid #e6e8ea"></div>
<div class="pb" style="left:201.2px;width:25.7px;background:#fff;border:1px solid #97abb7;box-shadow:0 2px 3px rgba(0,0,0,.08)"></div>
<div class="pb" style="left:233.3px;width:25.4px;background:#fff;border:1px solid #97abb7;box-shadow:0 2px 3px rgba(0,0,0,.08)"></div>
<svg class="a" style="left:90px;top:742px" width="170" height="26" viewBox="0 0 170 26"><path d="M8.6 9.2 V16.4 M16.2 9.2 L12.6 12.8 L16.2 16.4" fill="none" stroke="#8d9196" stroke-width="1.6" stroke-linecap="round" stroke-linejoin="round"/><path d="M46.4 9.2 L42.8 12.8 L46.4 16.4" fill="none" stroke="#8d9196" stroke-width="1.6" stroke-linecap="round" stroke-linejoin="round"/><path d="M121.8 9.2 L125.4 12.8 L121.8 16.4" fill="none" stroke="#253845" stroke-width="1.7" stroke-linecap="round" stroke-linejoin="round"/><path d="M152.2 9.2 L155.8 12.8 L152.2 16.4 M160 9.2 V16.4" fill="none" stroke="#253845" stroke-width="1.7" stroke-linecap="round" stroke-linejoin="round"/></svg>
<div class="a" style="left:153.10px;top:747.862px;font-size:12.5px;line-height:13.963px;color:#263b49;-webkit-text-stroke:0.2px #263b49;"><span class="sx" style="transform:scaleX(0.7000)">1</span></div>
<div class="a" style="left:164.80px;top:747.862px;font-size:12.5px;line-height:13.963px;color:#263b49;-webkit-text-stroke:0.2px #263b49;"><span class="sx" style="transform:scaleX(0.9182)">of</span></div>
<div class="a" style="left:181.60px;top:747.862px;font-size:12.5px;line-height:13.963px;color:#263b49;-webkit-text-stroke:0.2px #263b49;"><span class="sx" style="transform:scaleX(0.9286)">65</span></div>
<div class="pb" style="left:273.3px;width:128px;background:#fff;border:1px solid #97abb7;box-shadow:0 2px 3px rgba(0,0,0,.08)"></div>
<div class="a" style="left:287.00px;top:747.862px;font-size:12.5px;line-height:13.963px;color:#263b49;-webkit-text-stroke:0.2px #263b49;"><span class="sx" style="transform:scaleX(0.9507)">20 per page</span></div>
<svg class="a" style="left:376px;top:749px" width="14" height="12" viewBox="0 0 14 12"><path d="M3 3.6 L6.7 7.3 L10.4 3.6" fill="none" stroke="#1d2a33" stroke-width="1.7" stroke-linecap="round" stroke-linejoin="round"/></svg>
<div class="pb" style="left:1088.2px;width:101.6px;background:#f0f1f3;border:1px solid #e3e5e8"></div>
<div class="a" style="left:1115.50px;top:748.015px;font-size:12px;line-height:13.404px;color:#6b7079;-webkit-text-stroke:0.4px #6b7079;"><span class="sx" style="transform:scaleX(0.9938)">Continue</span></div>
</body>
</html>
